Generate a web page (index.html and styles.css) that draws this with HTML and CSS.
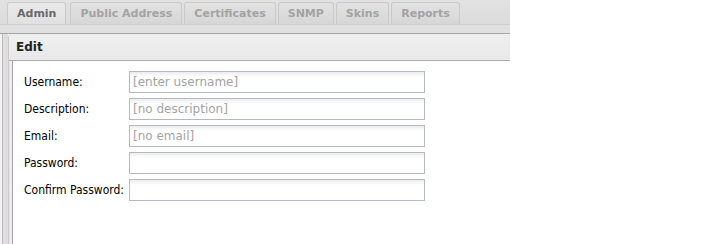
FILE: index.html
```html
<!DOCTYPE html>
<html>
<head>
<meta charset="utf-8">
<link rel="stylesheet" href="styles.css">
</head>
<body>
<div class="tabpanel">
  <div class="strip">
    <div class="tabs">
      <div class="tab active">Admin</div>
      <div class="tab">Public Address</div>
      <div class="tab">Certificates</div>
      <div class="tab">SNMP</div>
      <div class="tab">Skins</div>
      <div class="tab">Reports</div>
    </div>
    <div class="strip-bottom"></div>
  </div>
  <div class="frame">
    <div class="panel">
      <div class="header">Edit</div>
      <div class="body">
        <div class="form">
          <label class="lbl">Username:</label>
          <input class="field" type="text" placeholder="[enter username]">
          <label class="lbl">Description:</label>
          <input class="field" type="text" placeholder="[no description]">
          <label class="lbl">Email:</label>
          <input class="field" type="text" placeholder="[no email]">
          <label class="lbl">Password:</label>
          <input class="field" type="password">
          <label class="lbl">Confirm Password:</label>
          <input class="field" type="password">
        </div>
      </div>
    </div>
  </div>
</div>
</body>
</html>
```

FILE: styles.css
```css
html, body {
  margin: 0;
  padding: 0;
  background: #ffffff;
  overflow: hidden;
}
body {
  font-family: "DejaVu Sans", Verdana, sans-serif;
  font-size: 12px;
  color: #000;
}
.tabpanel {
  width: 510px;
  height: 244px;
  display: flex;
  flex-direction: column;
}
.strip {
  height: 34px;
  background: linear-gradient(#e2e2e2, #d9d9d9);
  display: flex;
  flex-direction: column;
  box-sizing: border-box;
}
.tabs {
  display: flex;
  gap: 2px;
  padding: 2px 0 0 7px;
  height: 24px;
  box-sizing: border-box;
}
.tab {
  box-sizing: border-box;
  height: 22px;
  padding: 0 9px;
  border: 1px solid #cacaca;
  border-bottom: none;
  border-radius: 3px 3px 0 0;
  background: linear-gradient(#e2e2e2, #d6d6d6);
  color: #a3a3a3;
  font-weight: bold;
  font-size: 11px;
  line-height: 21px;
  display: flex;
  align-items: center;
}
.tab.active {
  background: linear-gradient(#eaeaea, #e0e0e0);
  color: #6a6a6a;
  margin-right: 2px;
}
.strip-bottom {
  flex: 1;
  background: #e0e0e0;
  border-top: 1px solid #d0d0d0;
  border-bottom: 1px solid #a9a4a6;
}
.frame {
  flex: 1;
  display: flex;
  padding-left: 8px;
  background: linear-gradient(90deg, #f2f2f2 0, #f2f2f2 2px, #bdbdbd 2px, #bdbdbd 3px, #dedede 3px);
  background-size: 8px 100%;
  background-repeat: no-repeat;
}
.panel {
  flex: 1;
  display: flex;
  flex-direction: column;
  border-left: 1px solid #c9c9c9;
  border-top-left-radius: 4px;
  background: #ececec;
}
.header {
  height: 27px;
  box-sizing: border-box;
  padding-left: 7px;
  font-weight: bold;
  font-size: 12px;
  line-height: 26px;
  color: #222;
  background: linear-gradient(#efefef, #e8e8e8);
  border-bottom: 1px solid #b9a9ab;
  border-top-left-radius: 4px;
}
.body {
  flex: 1;
  margin-left: 3px;
  border-left: 1px solid #a99fb0;
  background: #fff;
}
.form {
  display: grid;
  grid-template-columns: 105px 296px;
  row-gap: 5px;
  padding: 10px 0 0 11px;
  align-items: center;
}
.lbl {
  font-family: "DejaVu Sans Condensed", "DejaVu Sans", sans-serif;
  font-size: 12px;
  color: #000;
}
.field {
  box-sizing: border-box;
  width: 296px;
  height: 22px;
  margin: 0;
  padding: 0 0 0 3px;
  border: 1px solid #b5b8c8;
  border-radius: 0;
  background: #fff linear-gradient(#ececec, #ffffff 5px);
  font-family: "DejaVu Sans", sans-serif;
  font-size: 12px;
  color: #000;
  outline: none;
}
.field::placeholder {
  color: #a3a3a3;
}
```
